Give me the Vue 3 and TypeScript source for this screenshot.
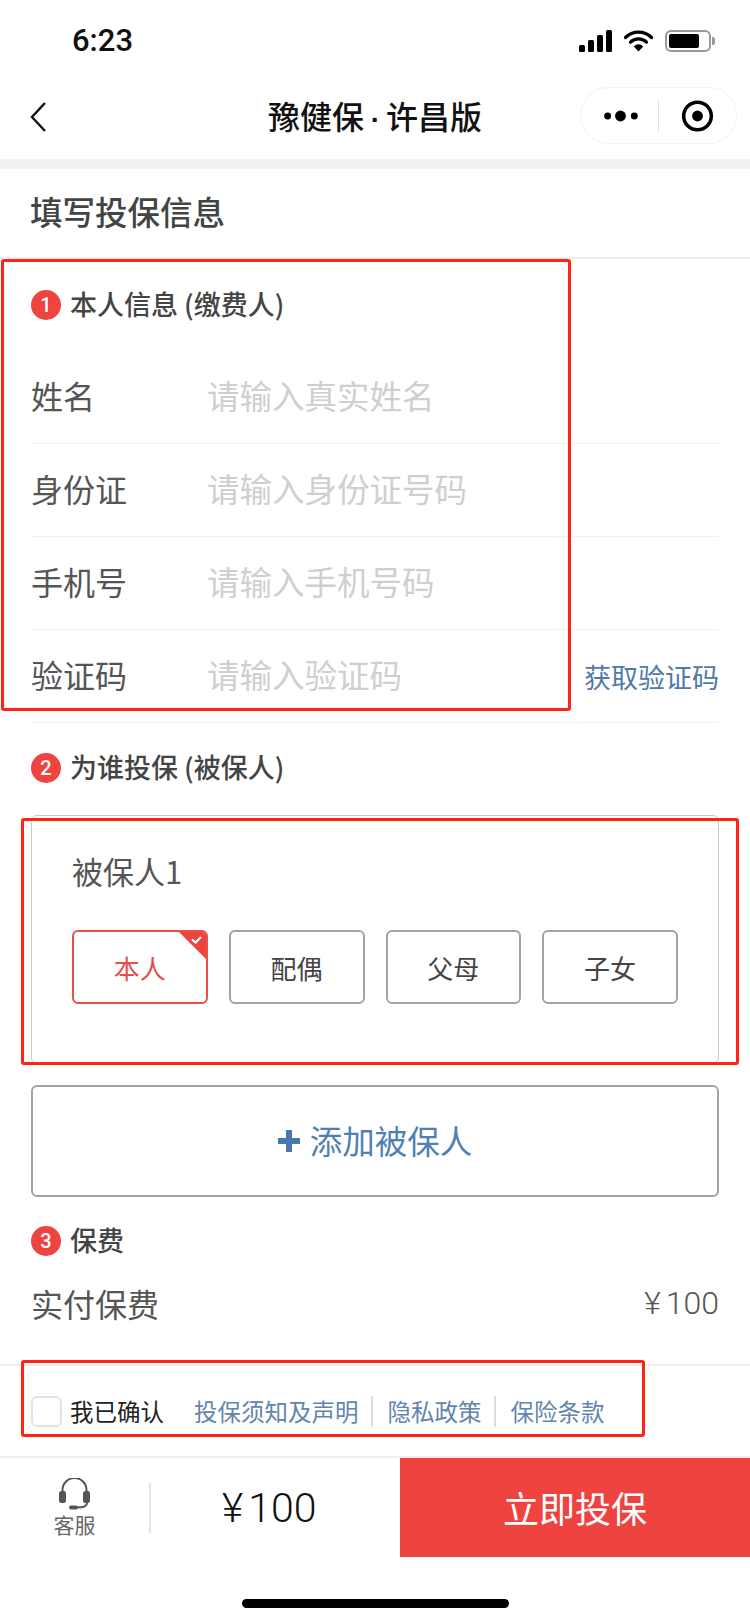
<script setup lang="ts">
interface FormRow {
  label: string
  placeholder: string
  action?: string
}

const rows: FormRow[] = [
  { label: '姓名', placeholder: '请输入真实姓名' },
  { label: '身份证', placeholder: '请输入身份证号码' },
  { label: '手机号', placeholder: '请输入手机号码' },
  { label: '验证码', placeholder: '请输入验证码', action: '获取验证码' }
]

const relations = ['本人', '配偶', '父母', '子女']
const signalBars = [
  { x: 0, y: 15, h: 7 },
  { x: 9, y: 10, h: 12 },
  { x: 18, y: 5, h: 17 },
  { x: 27, y: 0, h: 22 }
]
const links = ['投保须知及声明', '隐私政策', '保险条款']
</script>

<template>
  <div class="page">
    <div class="status-bar">
      <span class="time">6:23</span>
      <div class="status-icons">
        <svg width="33" height="22" viewBox="0 0 33 22">
          <rect v-for="bar in signalBars" :key="bar.x" :x="bar.x" :y="bar.y" width="6" :height="bar.h" rx="1.5" fill="#000" />
        </svg>
        <svg width="29" height="22" viewBox="0 0 29 22">
          <path d="M1.5 7.5a18.5 18.5 0 0 1 26 0" fill="none" stroke="#000" stroke-width="3.4" stroke-linecap="round" />
          <path d="M6.5 12.2a11.5 11.5 0 0 1 16 0" fill="none" stroke="#000" stroke-width="3.2" stroke-linecap="round" />
          <path d="M9.8 16.4a6.4 6.4 0 0 1 9.4 0L14.5 21.5z" fill="#000" />
        </svg>
        <div class="battery"><div class="battery-level"></div></div>
      </div>
    </div>

    <div class="nav-bar">
      <svg class="back" width="16" height="30" viewBox="0 0 16 30">
        <path d="M15 1 2 15l13 14" fill="none" stroke="#111" stroke-width="2.4" />
      </svg>
      <div class="nav-title">豫健保<span class="nav-dot"> · </span>许昌版</div>
      <div class="capsule">
        <svg width="78" height="34" viewBox="0 0 78 34">
          <circle cx="27" cy="17" r="3.5" fill="#000" />
          <circle cx="40" cy="17" r="5.5" fill="#000" />
          <circle cx="54" cy="17" r="3.5" fill="#000" />
        </svg>
        <div class="capsule-line"></div>
        <svg width="78" height="34" viewBox="0 0 78 34">
          <circle cx="39" cy="17" r="14" fill="none" stroke="#000" stroke-width="3.6" />
          <circle cx="39" cy="17" r="5.5" fill="#000" />
        </svg>
      </div>
    </div>
    <div class="band"></div>

    <div class="page-title">填写投保信息</div>

    <section class="personal">
      <h2 class="section-head first"><span class="step">1</span>本人信息 (缴费人)</h2>
      <div v-for="row in rows" :key="row.label" class="form-row">
        <span class="row-label">{{ row.label }}</span>
        <span class="row-placeholder">{{ row.placeholder }}</span>
        <span v-if="row.action" class="row-action">{{ row.action }}</span>
      </div>
    </section>

    <section>
      <h2 class="section-head second"><span class="step">2</span>为谁投保 (被保人)</h2>
      <div class="insured-card">
        <div class="insured-name">被保人1</div>
        <div class="chips">
          <div v-for="(item, i) in relations" :key="item" class="chip" :class="{ active: i === 0 }">
            {{ item }}
            <svg v-if="i === 0" class="chip-corner" width="29" height="29" viewBox="0 0 29 29">
              <path d="M0 0h23a6 6 0 0 1 6 6v23z" fill="#ef4340" />
              <path d="M14 8.5l3.5 3 5.500-5.500" fill="none" stroke="#fff" stroke-width="2.2" />
            </svg>
          </div>
        </div>
      </div>
      <div class="add-btn">
        <svg width="22" height="24" viewBox="0 0 22 24">
          <path d="M11 1v22M0 12h22" stroke="#4a79b0" stroke-width="6" />
        </svg>
        <span class="add-text">添加被保人</span>
      </div>
    </section>

    <section>
      <h2 class="section-head third"><span class="step">3</span>保费</h2>
      <div class="fee-row">
        <span>实付保费</span>
        <span class="fee-value"><span class="yen">¥</span>100</span>
      </div>
    </section>

    <div class="agreement">
      <span class="checkbox"></span>
      <span class="confirm">我已确认</span>
      <div class="links">
        <span v-for="link in links" :key="link" class="link">{{ link }}</span>
      </div>
    </div>

    <div class="footer">
      <div class="service">
        <svg width="33" height="33" viewBox="0 0 33 33">
          <path d="M4.5 14V12a12 12 0 0 1 24 0v2" fill="none" stroke="#555" stroke-width="2" />
          <rect x="1" y="13" width="7" height="12" rx="2.5" fill="#555" />
          <rect x="25" y="13" width="7" height="12" rx="2.5" fill="#555" />
          <path d="M29 25c0 3.500-3 4.500-10 4.500" fill="none" stroke="#555" stroke-width="2" />
          <rect x="11" y="27.500" width="9" height="4" rx="2" fill="#555" />
        </svg>
        <span>客服</span>
      </div>
      <div class="footer-line"></div>
      <div class="footer-price"><span class="yen">¥</span>100</div>
      <div class="buy">立即投保</div>
    </div>
    <div class="home-area"><div class="home-bar"></div></div>

    <!-- red boxes marked on the screenshot -->
    <div class="mark mark-one"></div>
    <div class="mark mark-two"></div>
    <div class="mark mark-three"></div>
  </div>
</template>

<style scoped>
.page {
  position: relative;
  width: 750px;
  height: 1623px;
  overflow: hidden;
  background: #fff;
  color: #444;
  font-family: "Noto Sans CJK SC", "Noto Sans", sans-serif;
}

.status-bar {
  height: 75px;
  box-sizing: border-box;
  padding: 30px 39px 0 72px;
  display: flex;
  justify-content: space-between;
  align-items: flex-start;
}

.time {
  height: 22px;
  line-height: 22px;
  font-family: Roboto, sans-serif;
  font-size: 31px;
  font-weight: 500;
  color: #111;
}

.status-icons {
  display: flex;
  align-items: center;
  gap: 12px;
}

.battery {
  position: relative;
  width: 46px;
  height: 22px;
  box-sizing: border-box;
  border: 2px solid #999;
  border-radius: 6px;
  padding: 2px;
}

.battery::after {
  content: "";
  position: absolute;
  right: -6px;
  top: 5px;
  width: 3px;
  height: 8px;
  border-radius: 0 2px 2px 0;
  background: #999;
}

.battery-level {
  width: 30px;
  height: 14px;
  border-radius: 2px;
  background: #000;
}

.nav-bar {
  height: 84px;
  position: relative;
  display: flex;
  align-items: center;
  justify-content: center;
}

.back {
  position: absolute;
  left: 30px;
  top: 27px;
}

.nav-title {
  padding-bottom: 4px;
  font-size: 32px;
  font-weight: 500;
  color: #111;
  white-space: pre;
}

.nav-dot {
  font-family: "Liberation Sans", sans-serif;
  font-size: 28px;
  font-weight: 700;
  letter-spacing: -1px;
}

.capsule {
  position: absolute;
  left: 580px;
  top: 12px;
  width: 157px;
  height: 57px;
  box-sizing: border-box;
  border: 1px solid #f2f2f2;
  border-radius: 29px;
  display: flex;
  align-items: center;
}

.capsule-line {
  width: 1px;
  height: 34px;
  background: #e2e2e2;
}

.band {
  height: 10px;
  background: #f1f1f1;
}

.page-title {
  height: 90px;
  box-sizing: border-box;
  padding: 0 0 5px 30px;
  border-bottom: 2px solid #eee;
  display: flex;
  align-items: center;
  font-size: 32.5px;
  font-weight: 500;
  color: #444;
}

.section-head {
  box-sizing: border-box;
  margin: 0 0 0 31px;
  padding-bottom: 4px;
  display: flex;
  align-items: center;
  font-size: 27px;
  font-weight: 500;
  color: #444;
}

.section-head.first {
  height: 92px;
}

.section-head.second {
  height: 90px;
}

.section-head.third {
  height: 60px;
  margin-top: 14px;
}

.step {
  width: 30px;
  height: 30px;
  margin: 4px 9px 0 0;
  border-radius: 50%;
  background: #ef4340;
  color: #fff;
  font-family: Roboto, sans-serif;
  font-size: 20px;
  font-weight: 500;
  line-height: 30px;
  text-align: center;
}

.form-row {
  height: 93px;
  box-sizing: border-box;
  margin: 0 31px;
  border-bottom: 1px solid #f0f0f0;
  display: flex;
  align-items: center;
  font-size: 32px;
}

.row-label {
  width: 176px;
  padding-bottom: 5px;
  color: #555;
}

.row-placeholder {
  flex: 1;
  padding-bottom: 5px;
  font-size: 32.5px;
  color: #cfcfcf;
}

.row-action {
  font-size: 27px;
  color: #4f7aa8;
}

.insured-card {
  height: 249px;
  box-sizing: border-box;
  margin: 2px 31px 0;
  padding: 31px 40px 0;
  border: 1px solid #c9c9c9;
  border-radius: 6px;
}

.insured-name {
  height: 48px;
  line-height: 48px;
  font-size: 31px;
  color: #555;
}

.chips {
  margin-top: 35px;
  display: flex;
  gap: 21px;
}

.chip {
  position: relative;
  width: 136px;
  height: 74px;
  box-sizing: border-box;
  border: 2px solid #a3a3a3;
  border-radius: 6px;
  overflow: hidden;
  display: flex;
  align-items: center;
  justify-content: center;
  font-size: 26px;
  color: #444;
}

.chip.active {
  border-color: #e8504a;
  color: #e2504a;
}

.chip-corner {
  position: absolute;
  top: -1px;
  right: -1px;
}

.add-btn {
  height: 112px;
  box-sizing: border-box;
  margin: 21px 31px 0;
  border: 2px solid #a3a3a3;
  border-radius: 6px;
  display: flex;
  align-items: center;
  justify-content: center;
  gap: 10px;
  font-size: 32.5px;
  color: #4f7fb3;
}

.add-text {
  padding-bottom: 4px;
}

.fee-row {
  height: 60px;
  margin: 2px 31px 0;
  display: flex;
  align-items: center;
  justify-content: space-between;
  font-size: 32px;
  color: #555;
}

.fee-value {
  font-family: Roboto, sans-serif;
  font-weight: 300;
}

.yen {
  margin-right: 5px;
}

.agreement {
  height: 94px;
  box-sizing: border-box;
  margin-top: 31px;
  padding: 30px 0 0 31px;
  border-top: 2px solid #eee;
  border-bottom: 2px solid #eee;
  display: flex;
  align-items: flex-start;
}

.checkbox {
  width: 31px;
  height: 31px;
  box-sizing: border-box;
  border: 2px solid #e3e3e3;
  border-radius: 6px;
}

.confirm {
  margin-left: 8px;
  line-height: 31px;
  font-size: 23.5px;
  color: #222;
}

.links {
  margin-left: 30px;
  display: flex;
}

.link {
  height: 31px;
  line-height: 31px;
  font-size: 23.5px;
  color: #6285ad;
  padding: 0 12px 0 15px;
  border-left: 2px solid #ddd;
}

.link:first-child {
  padding-left: 0;
  border-left: none;
}

.footer {
  height: 99px;
  display: flex;
  align-items: center;
}

.service {
  width: 149px;
  display: flex;
  flex-direction: column;
  align-items: center;
  font-size: 21px;
  line-height: 26px;
  color: #666;
}

.footer-line {
  width: 2px;
  height: 50px;
  background: #e6e6e6;
}

.footer-price {
  flex: 1;
  padding-left: 71px;
  font-family: Roboto, sans-serif;
  font-size: 41px;
  font-weight: 300;
  color: #111;
}

.buy {
  width: 350px;
  height: 99px;
  box-sizing: border-box;
  padding-bottom: 2px;
  background: #ef4340;
  color: #fff;
  display: flex;
  align-items: center;
  justify-content: center;
  font-size: 36px;
}

.home-area {
  display: flex;
  justify-content: center;
  padding-top: 42px;
}

.home-bar {
  width: 267px;
  height: 9px;
  border-radius: 5px;
  background: #000;
}

.mark {
  position: absolute;
  box-sizing: border-box;
  border: 3px solid #ff2318;
  border-radius: 3px;
}

.mark-one {
  left: 1px;
  top: 259px;
  width: 570px;
  height: 452px;
}

.mark-two {
  left: 21px;
  top: 818px;
  width: 718px;
  height: 247px;
}

.mark-three {
  left: 21px;
  top: 1360px;
  width: 624px;
  height: 77px;
}
</style>
